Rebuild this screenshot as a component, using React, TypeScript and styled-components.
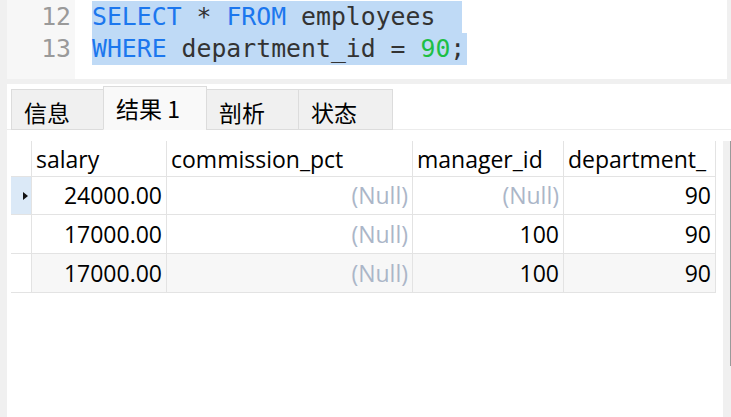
import React from 'react'
import styled, { createGlobalStyle } from 'styled-components'

const GlobalStyle = createGlobalStyle`
  html, body {
    margin: 0;
    padding: 0;
    background: #f0f0f0;
  }
`

const Page = styled.div`
  width: 731px;
  height: 417px;
  display: flex;
  flex-direction: column;
  gap: 5px;
  padding-left: 7px;
  box-sizing: border-box;
  background: #f0f0f0;
  overflow: hidden;
`

// Editor
const Editor = styled.div`
  display: flex;
  width: 720px;
  height: 79px;
  flex-shrink: 0;
  background: #fff;
`

const Gutter = styled.div`
  width: 68px;
  background: #f7f7f7;
  padding: 1px 4px 0 0;
  box-sizing: border-box;
  text-align: right;
`

const Code = styled.div`
  flex: 1;
  padding: 1px 0 0 17px;
`

const monoFont = `'DejaVu Sans Mono', 'Liberation Mono', monospace`

const LineNo = styled.div`
  font-family: ${monoFont};
  font-size: 24.8px;
  line-height: 32px;
  height: 32px;
  color: #9a9a9a;
`

const Line = styled.div`
  font-family: ${monoFont};
  font-size: 24.8px;
  line-height: 32px;
  height: 32px;
  white-space: pre;
  color: #333;
`

const Selected = styled.span<{ $extra?: number }>`
  background: #bfdaf6;
  padding-right: ${p => p.$extra ?? 0}px;
  display: inline-block;
  height: 32px;
`

const Kw = styled.span`
  color: #1c77ee;
`

const Num = styled.span`
  color: #1dbf45;
`

// Results
const Results = styled.div`
  flex: 1;
  display: flex;
  flex-direction: column;
  background: #fff;
  min-height: 0;
`

const TabBar = styled.div`
  display: flex;
  align-items: flex-end;
  height: 46px;
  padding-left: 4px;
  border-bottom: 1px solid #ececec;
  box-sizing: border-box;
`

const Tab = styled.div<{ $active?: boolean; $w: number }>`
  width: ${p => p.$w}px;
  height: ${p => (p.$active ? 44 : 41)}px;
  box-sizing: border-box;
  padding-left: 12px;
  padding-top: ${p => (p.$active ? 8 : 9)}px;
  background: ${p => (p.$active ? '#f9f9f9' : '#f0f0f0')};
  border: 1px solid #dcdcdc;
  border-bottom: ${p => (p.$active ? '1px solid #f9f9f9' : '1px solid #dcdcdc')};
  margin-bottom: -1px;
  margin-right: -1px;
  font-family: 'Noto Sans CJK SC', 'Noto Sans', sans-serif;
  font-size: 23px;
  line-height: 26px;
  color: #000;
`

const GridArea = styled.div`
  flex: 1;
  display: flex;
  padding: 11px 0 0 4px;
  min-height: 0;
`

const Grid = styled.div`
  display: grid;
  grid-template-columns: 21px 135px 246px 151px 152px;
  grid-template-rows: 36px 38px 39px 39px;
  align-self: flex-start;
  font-family: 'Open Sans', 'Noto Sans', sans-serif;
  font-size: 23px;
  color: #000;
`

const Cell = styled.div<{ $align?: 'left' | 'right'; $bg?: string; $muted?: boolean }>`
  box-sizing: border-box;
  border-right: 1px solid #e3e3e3;
  border-bottom: 1px solid #e3e3e3;
  background: ${p => p.$bg ?? '#fff'};
  color: ${p => (p.$muted ? '#abb6c8' : '#000')};
  display: flex;
  align-items: center;
  justify-content: ${p => (p.$align === 'right' ? 'flex-end' : 'flex-start')};
  padding: 0 4px 1px 4px;
  white-space: nowrap;
  overflow: hidden;
`

const HeadCell = styled(Cell)`
  padding-top: 2px;
`

const RowHead = styled.div<{ $bg?: string }>`
  box-sizing: border-box;
  border-bottom: 1px solid #e3e3e3;
  border-right: 1px solid #e3e3e3;
  background: ${p => p.$bg ?? '#fff'};
  display: flex;
  align-items: center;
  justify-content: center;
  padding-left: 8px;
`

const Caret = styled.div`
  width: 0;
  height: 0;
  border-top: 4.5px solid transparent;
  border-bottom: 4.5px solid transparent;
  border-left: 5px solid #111;
`

const Scrollbar = styled.div`
  margin-left: auto;
  width: 8px;
  background: #f0f0f0;
  display: flex;
  justify-content: flex-end;
`

const Thumb = styled.div`
  width: 1px;
  height: 225px;
  background: #9a9a9a;
`

type Row = { salary: string; pct: string | null; manager: string | null; dept: string }

const rows: Row[] = [
  { salary: '24000.00', pct: null, manager: null, dept: '90' },
  { salary: '17000.00', pct: null, manager: '100', dept: '90' },
  { salary: '17000.00', pct: null, manager: '100', dept: '90' },
]

const App: React.FC = () => {
  return (
    <>
      <GlobalStyle />
      <Page>
        <Editor>
          <Gutter>
            <LineNo>12</LineNo>
            <LineNo>13</LineNo>
          </Gutter>
          <Code>
            <Line>
              <Selected $extra={12}>
                <Kw>SELECT</Kw> * <Kw>FROM</Kw> employees{' '}
              </Selected>
            </Line>
            <Line>
              <Selected $extra={2}>
                <Kw>WHERE</Kw> department_id = <Num>90</Num>;
              </Selected>
            </Line>
          </Code>
        </Editor>
        <Results>
          <TabBar>
            <Tab $w={93}>信息</Tab>
            <Tab $w={104} $active>结果 1</Tab>
            <Tab $w={93}>剖析</Tab>
            <Tab $w={95}>状态</Tab>
          </TabBar>
          <GridArea>
            <Grid>
              <RowHead />
              <HeadCell>salary</HeadCell>
              <HeadCell>commission_pct</HeadCell>
              <HeadCell>manager_id</HeadCell>
              <HeadCell>department_</HeadCell>
              {rows.map((r, i) => {
                const bg = i === 2 ? '#f7f7f7' : '#fff'
                return (
                  <React.Fragment key={i}>
                    <RowHead $bg={i === 0 ? '#dbe9f7' : '#fff'}>
                      {i === 0 && <Caret />}
                    </RowHead>
                    <Cell $align='right' $bg={bg}>{r.salary}</Cell>
                    <Cell $align='right' $bg={bg} $muted={r.pct === null}>
                      {r.pct ?? '(Null)'}
                    </Cell>
                    <Cell $align='right' $bg={bg} $muted={r.manager === null}>
                      {r.manager ?? '(Null)'}
                    </Cell>
                    <Cell $align='right' $bg={bg}>{r.dept}</Cell>
                  </React.Fragment>
                )
              })}
            </Grid>
            <Scrollbar>
              <Thumb />
            </Scrollbar>
          </GridArea>
        </Results>
      </Page>
    </>
  )
}

export default App
